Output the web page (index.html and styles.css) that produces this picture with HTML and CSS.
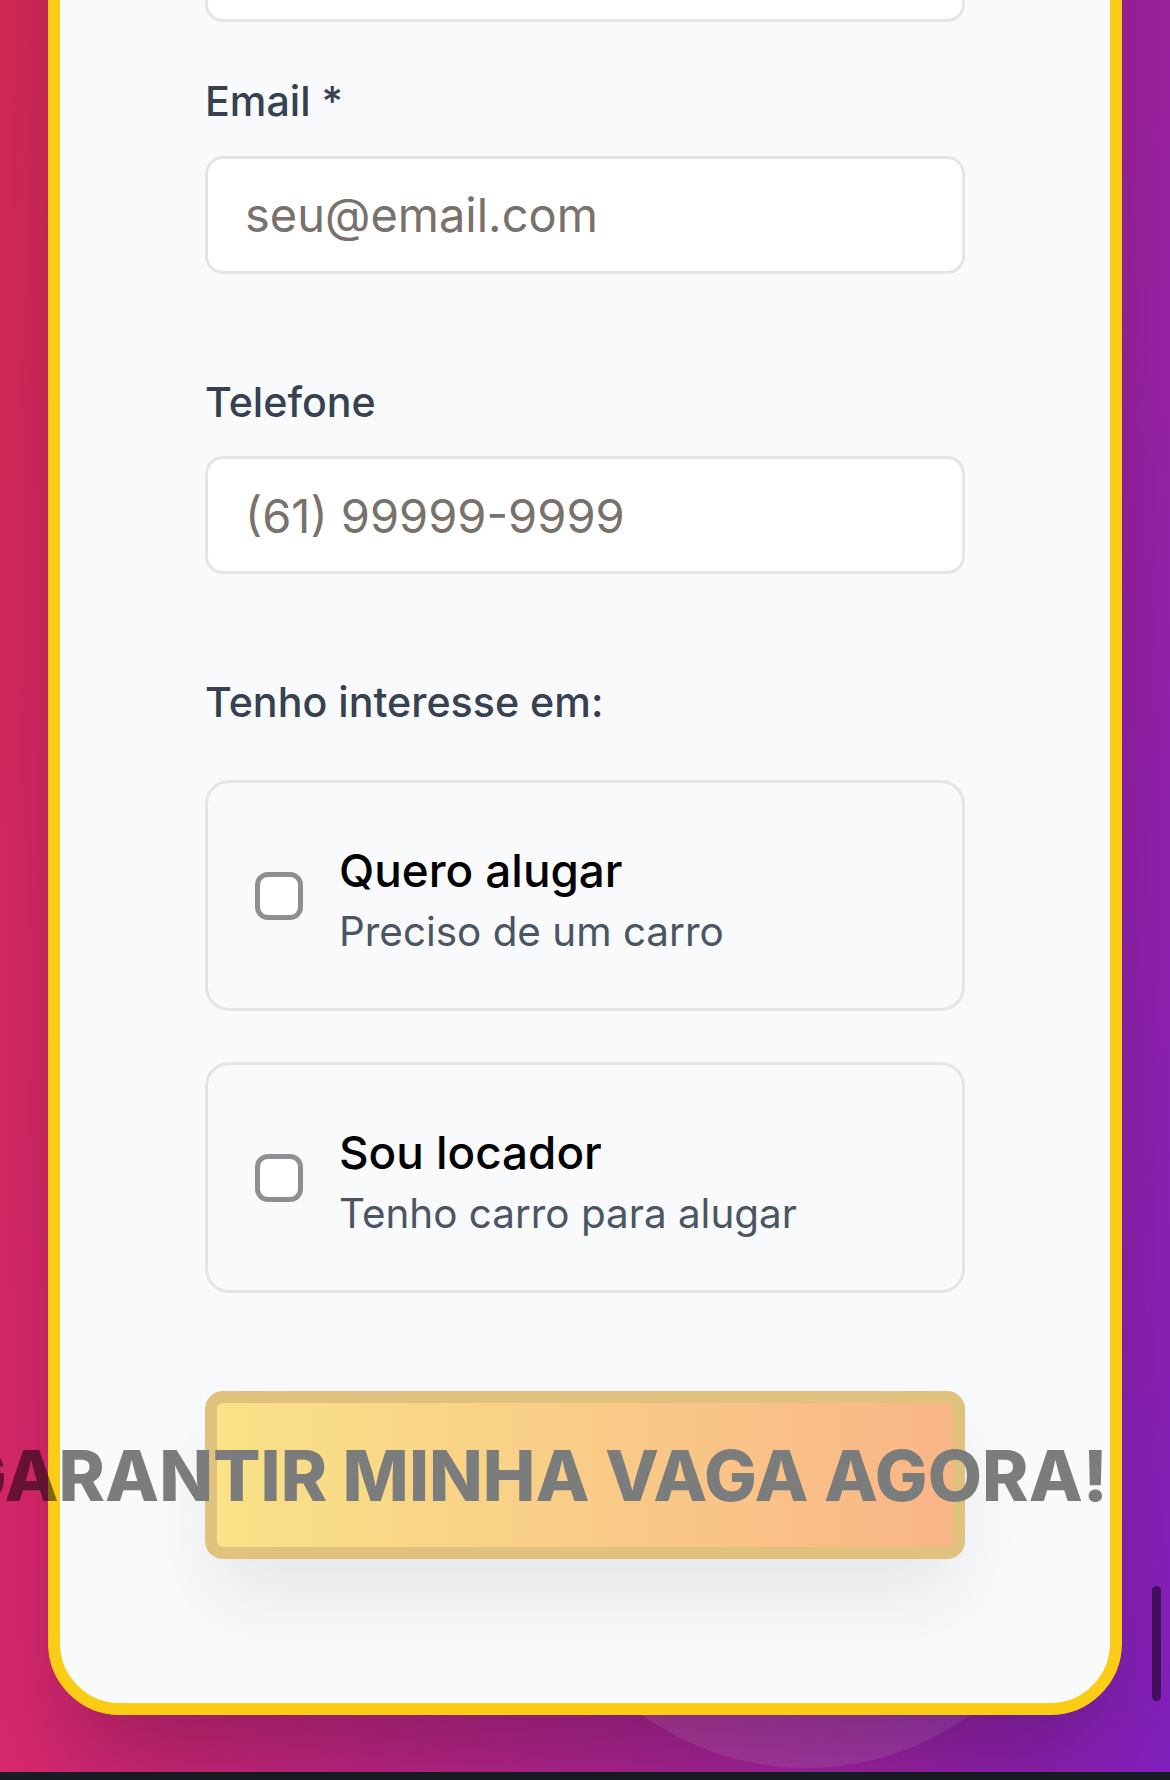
FILE: index.html
```html
<!DOCTYPE html>
<html lang="pt-BR">
<head>
<meta charset="utf-8">
<title>Cadastro</title>
<link rel="stylesheet" href="styles.css">
</head>
<body>
<div class="viewport">
  <section class="hero">
    <div class="blob"></div>
    <main class="card">
      <form class="form">
        <div class="field field-name">
          <input class="input" type="text" placeholder="Seu nome">
        </div>
        <div class="field">
          <label class="label" for="email">Email *</label>
          <input class="input" id="email" type="email" placeholder="seu@email.com">
        </div>
        <div class="field">
          <label class="label" for="tel">Telefone</label>
          <input class="input" id="tel" type="tel" placeholder="(61) 99999-9999">
        </div>
        <div class="field field-interest">
          <span class="label">Tenho interesse em:</span>
          <div class="options">
            <label class="option">
              <input class="check" type="checkbox">
              <span class="option-text">
                <span class="option-title">Quero alugar</span>
                <span class="option-sub">Preciso de um carro</span>
              </span>
            </label>
            <label class="option">
              <input class="check" type="checkbox">
              <span class="option-text">
                <span class="option-title">Sou locador</span>
                <span class="option-sub">Tenho carro para alugar</span>
              </span>
            </label>
          </div>
        </div>
        <button class="submit" type="button"><span class="submit-text">GARANTIR MINHA VAGA AGORA!</span></button>
      </form>
    </main>
  </section>
  <footer class="footer"></footer>
  <div class="scroll-indicator"></div>
</div>
</body>
</html>
```
FILE: styles.css
```css
* { box-sizing: border-box; margin: 0; padding: 0; }
html, body { height: 1780px; overflow: hidden; }
body {
  font-family: Inter, "Noto Sans", sans-serif;
  background: #181c24;
}
.viewport { position: relative; height: 1780px; overflow: hidden; }

.hero {
  position: relative;
  margin-top: -300px;
  padding: 0 48px 57px;
  background: linear-gradient(100deg, #d22a50 0%, #d8286e 24%, #9c22a0 80%, #8220be 100%);
}
.blob {
  position: absolute;
  left: 526px;
  top: 1508px;
  width: 560px;
  height: 560px;
  border-radius: 50%;
  background: rgba(255, 255, 255, 0.1);
}
.card {
  position: relative;
  z-index: 1;
  background: #f9fafb;
  border: 12px solid #facc15;
  border-radius: 72px;
  padding: 192px 145px 144px;
  box-shadow: 0 60px 100px -20px rgba(0, 0, 0, 0.25);
}
.form { display: flex; flex-direction: column; }
.field { display: flex; flex-direction: column; gap: 24.5px; margin-bottom: 98px; }
.field-name { margin-bottom: 49px; }
.field-interest { gap: 48px; }

.label {
  font-size: 41.2px;
  line-height: 60px;
  font-weight: 500;
  color: #374151;
}
.input {
  display: block;
  width: 100%;
  height: 118px;
  border: 3px solid #e5e5e5;
  border-radius: 18px;
  background: #fff;
  padding: 0 37px;
  font-family: inherit;
  font-size: 47px;
  color: #111827;
  outline: none;
}
.input::placeholder { color: #78716c; }

.options { display: flex; flex-direction: column; gap: 51px; }
.option {
  display: flex;
  align-items: center;
  gap: 36px;
  padding: 46.5px 47px;
  border: 3px solid #e5e5e5;
  border-radius: 24px;
  background: #f9fafb;
}
.check {
  appearance: none;
  -webkit-appearance: none;
  flex: none;
  width: 48px;
  height: 48px;
  border: 5px solid #8e8e93;
  border-radius: 13px;
  background: #fff;
}
.option-text { display: flex; flex-direction: column; padding-top: 10px; }
.option-title { font-size: 45.8px; line-height: 62px; font-weight: 500; color: #000; }
.option-sub { font-size: 40.4px; line-height: 60px; color: #4b5563; }

.submit {
  display: flex;
  align-items: center;
  justify-content: center;
  width: 100%;
  height: 168px;
  padding: 0 108px 0 0;
  border: 12px solid #ca8a04;
  border-radius: 18px;
  background: linear-gradient(to right, #facc15, #f97316);
  opacity: 0.5;
  box-shadow: 0 45px 75px -9px rgba(0, 0, 0, 0.15);
  font-family: inherit;
  cursor: pointer;
}
.submit-text {
  white-space: nowrap;
  font-size: 70.3px;
  font-weight: 800;
  color: #000;
}

.footer { height: 400px; background: #181c24; }
.scroll-indicator {
  position: absolute;
  left: 1152px;
  top: 1586px;
  width: 9px;
  height: 115px;
  border-radius: 5px;
  background: rgba(0, 0, 0, 0.5);
}
```
